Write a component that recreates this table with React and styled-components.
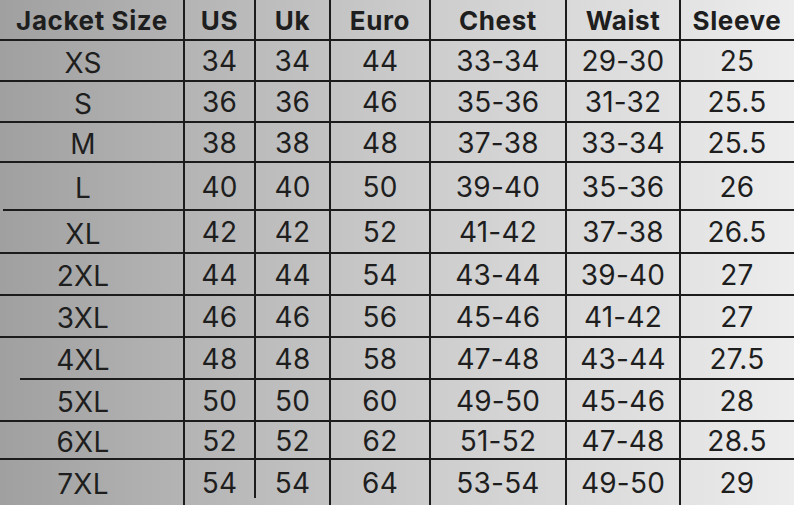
import React from 'react';
import styled, { createGlobalStyle } from 'styled-components';

const GlobalStyle = createGlobalStyle`
  html, body {
    margin: 0;
    padding: 0;
  }
  body {
    width: 794px;
    height: 505px;
    overflow: hidden;
    font-family: Inter, "Liberation Sans", sans-serif;
  }
`;

const Chart = styled.div`
  width: 794px;
  height: 505px;
  display: flex;
  flex-direction: column;
  overflow: hidden;
  color: #1e1e1e;
  background: linear-gradient(
    90deg,
    #a0a0a0 0%,
    #b3b3b3 22%,
    #c6c6c6 45%,
    #d5d5d5 65%,
    #e2e2e2 85%,
    #ededed 100%
  );
`;

const Row = styled.div`
  position: relative;
  display: grid;
  grid-template-columns: 184px 71px 75px 100px 136px 114px 114px;
  height: ${p => p.$h}px;
  flex: none;

  &::after {
    content: '';
    display: ${p => (p.$last ? 'none' : 'block')};
    position: absolute;
    left: ${p => p.$inset || 0}px;
    right: 0;
    bottom: -1px;
    height: 2px;
    background: #1c1c1c;
    z-index: 1;
  }
`;

const Cell = styled.div`
  position: relative;
  display: flex;
  align-items: center;
  justify-content: center;
  padding: ${p => (p.$head ? '0' : p.$first ? '4px 18px 0 0' : '1px 0 0 0')};
  font-size: ${p => (p.$head ? '26px' : '28px')};
  font-weight: ${p => (p.$head ? 700 : 400)};
  letter-spacing: ${p => (p.$head ? '0.6px' : '0.2px')};
  white-space: nowrap;

  &::before {
    content: '';
    display: ${p => (p.$first ? 'none' : 'block')};
    position: absolute;
    left: -1px;
    top: 0;
    bottom: ${p => p.$cut || 0}px;
    width: 2px;
    background: #1c1c1c;
  }
`;

const headers = ['Jacket Size', 'US', 'Uk', 'Euro', 'Chest', 'Waist', 'Sleeve'];

const rows = [
  { h: 41, cells: ['XS', '34', '34', '44', '33-34', '29-30', '25'] },
  { h: 41, cells: ['S', '36', '36', '46', '35-36', '31-32', '25.5'] },
  { h: 40, cells: ['M', '38', '38', '48', '37-38', '33-34', '25.5'] },
  { h: 48, cells: ['L', '40', '40', '50', '39-40', '35-36', '26'], inset: 3 },
  { h: 43, cells: ['XL', '42', '42', '52', '41-42', '37-38', '26.5'] },
  { h: 42, cells: ['2XL', '44', '44', '54', '43-44', '39-40', '27'] },
  { h: 42, cells: ['3XL', '46', '46', '56', '45-46', '41-42', '27'] },
  { h: 42, cells: ['4XL', '48', '48', '58', '47-48', '43-44', '27.5'], inset: 20 },
  { h: 42, cells: ['5XL', '50', '50', '60', '49-50', '45-46', '28'] },
  { h: 38, cells: ['6XL', '52', '52', '62', '51-52', '47-48', '28.5'] },
  { h: 46, cells: ['7XL', '54', '54', '64', '53-54', '49-50', '29'], last: true },
];

export default function App() {
  return (
    <>
      <GlobalStyle />
      <Chart>
        <Row $h={40}>
          {headers.map((t, i) => (
            <Cell key={t} $head $first={i === 0}>
              {t}
            </Cell>
          ))}
        </Row>
        {rows.map(r => (
          <Row key={r.cells[0]} $h={r.h} $inset={r.inset} $last={r.last}>
            {r.cells.map((t, i) => (
              <Cell key={i} $first={i === 0} $cut={r.last && i === 2 ? 7 : 0}>
                {t}
              </Cell>
            ))}
          </Row>
        ))}
      </Chart>
    </>
  );
}
